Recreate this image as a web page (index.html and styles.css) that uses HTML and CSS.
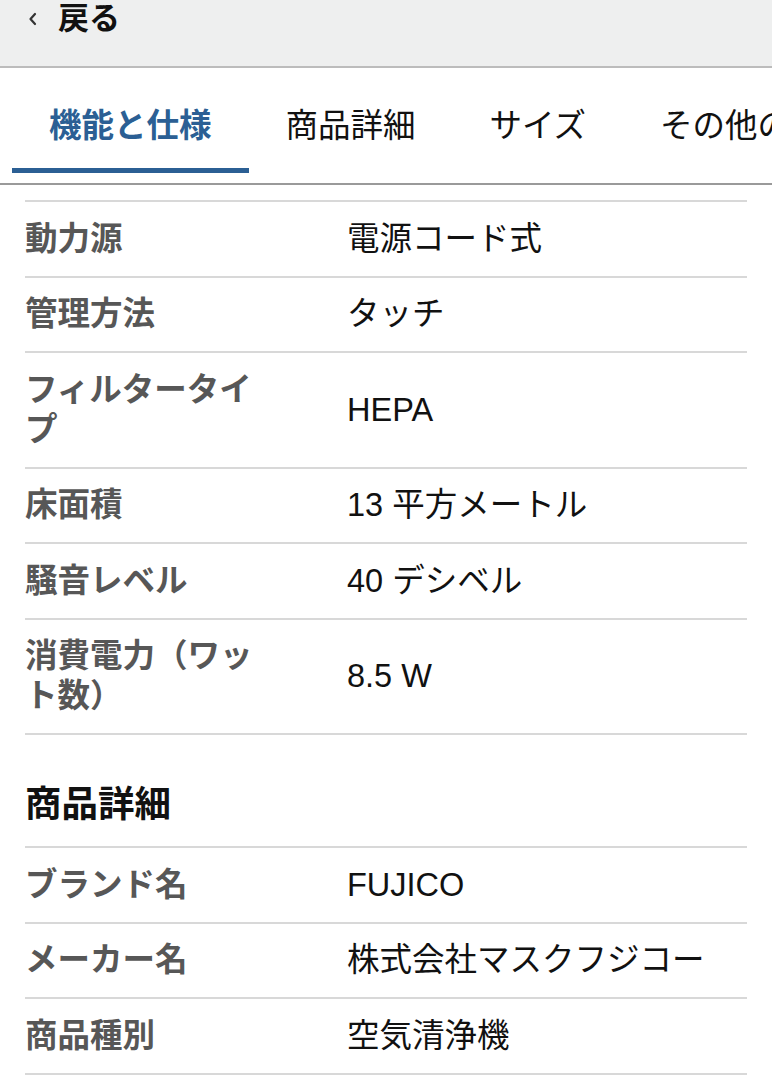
FILE: index.html
```html
<!DOCTYPE html>
<html lang="ja">
<head>
<meta charset="utf-8">
<link rel="stylesheet" href="styles.css">
</head>
<body>
<header class="topbar">
  <a class="back">
    <svg class="chev" width="12" height="14" viewBox="0 0 12 14"><path d="M8 2 L3.5 7 L8 12" fill="none" stroke="#333" stroke-width="2.2" stroke-linecap="round" stroke-linejoin="round"/></svg>
    <span class="back-text">戻る</span>
  </a>
</header>
<nav class="tabs">
  <div class="tab active">機能と仕様</div>
  <div class="tab">商品詳細</div>
  <div class="tab">サイズ</div>
  <div class="tab">その他の情報</div>
</nav>
<main class="content">
  <section class="spec">
    <div class="row"><div class="label">動力源</div><div class="value">電源コード式</div></div>
    <div class="row"><div class="label">管理方法</div><div class="value">タッチ</div></div>
    <div class="row"><div class="label">フィルタータイプ</div><div class="value">HEPA</div></div>
    <div class="row"><div class="label">床面積</div><div class="value">13 平方メートル</div></div>
    <div class="row"><div class="label">騒音レベル</div><div class="value">40 デシベル</div></div>
    <div class="row"><div class="label">消費電力（ワット数）</div><div class="value">8.5 W</div></div>
  </section>
  <h2 class="section-title">商品詳細</h2>
  <section class="spec">
    <div class="row"><div class="label">ブランド名</div><div class="value">FUJICO</div></div>
    <div class="row"><div class="label">メーカー名</div><div class="value">株式会社マスクフジコー</div></div>
    <div class="row"><div class="label">商品種別</div><div class="value">空気清浄機</div></div>
  </section>
</main>
</body>
</html>
```
FILE: styles.css
```css
html, body {
  margin: 0;
  padding: 0;
  background: #fff;
  font-family: "Liberation Sans", "Noto Sans CJK JP", sans-serif;
  color: #111;
  overflow: hidden;
}
.topbar {
  background: #eeefef;
  border-bottom: 2px solid #bcbcbc;
  box-sizing: border-box;
  height: 68px;
}
.back {
  display: flex;
  align-items: center;
  padding-left: 27px;
  height: 38px;
  gap: 19px;
}
.chev { display: block; }
.back-text {
  font-size: 31px;
  font-weight: 700;
  line-height: 38px;
  color: #111;
}
.tabs {
  display: flex;
  white-space: nowrap;
  padding-left: 12px;
  border-bottom: 2px solid #9a9a9a;
  box-sizing: border-box;
  height: 117px;
  overflow: hidden;
}
.tab {
  padding: 38px 37px 0;
  font-size: 32.5px;
  line-height: 40px;
  color: #111;
  flex: none;
}
.tab.active {
  color: #2b5f94;
  font-weight: 700;
  position: relative;
}
.tab.active::after {
  content: "";
  position: absolute;
  left: 0;
  right: 0;
  bottom: 10px;
  height: 5px;
  background: #2b5f94;
}
.content {
  padding: 15px 25px 0;
}
.spec {
  border-bottom: 2px solid #d8d8d8;
}
.row {
  display: flex;
  align-items: center;
  border-top: 2px solid #d8d8d8;
  padding: 16.75px 0;
  font-size: 32.5px;
  line-height: 40px;
}
.label {
  width: 322px;
  flex: none;
  padding-right: 80px;
  box-sizing: border-box;
  color: #575757;
  font-weight: 700;
}
.value {
  color: #111;
}
.section-title {
  margin: 0;
  padding: 48px 0 19px;
  font-size: 36.5px;
  line-height: 44px;
  font-weight: 700;
  color: #111;
}
```
